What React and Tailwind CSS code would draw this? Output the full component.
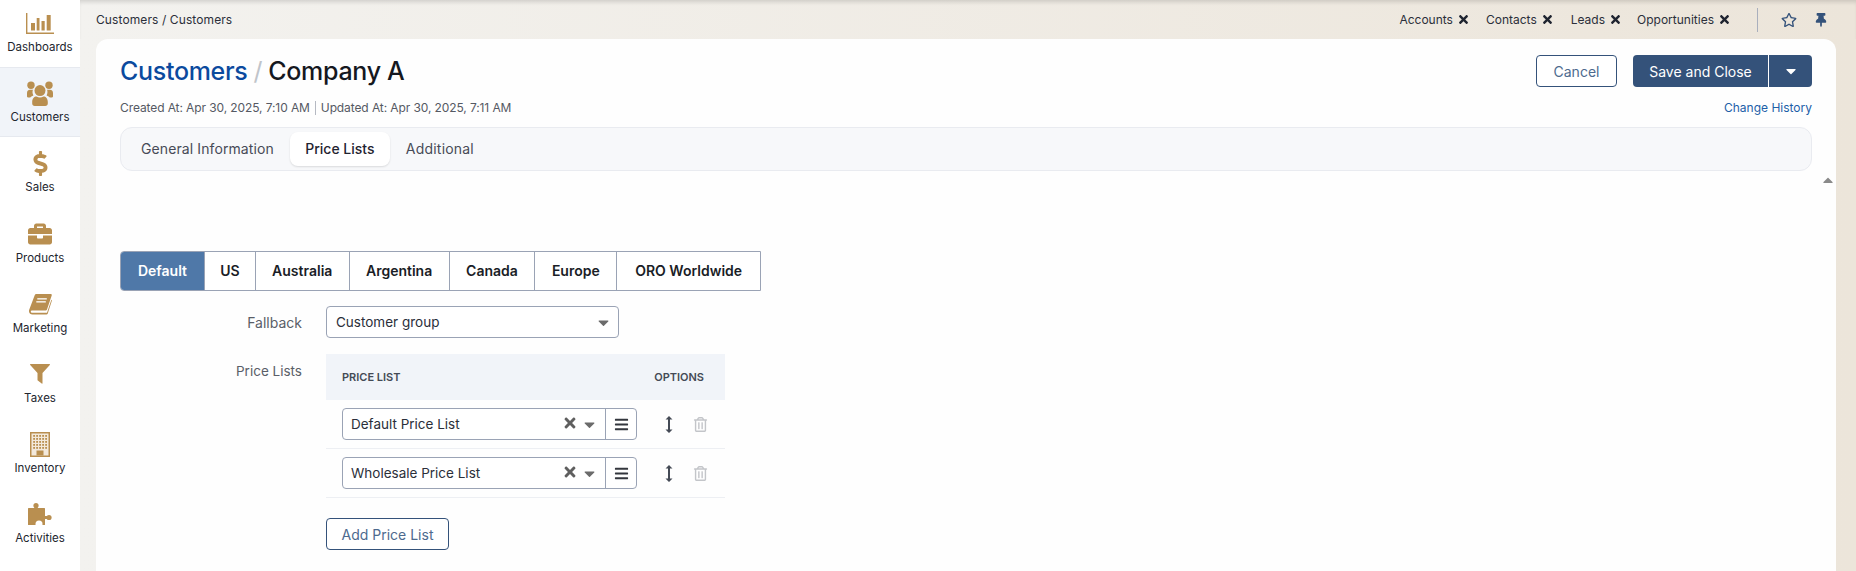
import React from "react";
import { FaDollarSign, FaBriefcase, FaTimes, FaBars, FaRegTrashAlt, FaThumbtack, FaRegStar, FaCaretDown, FaCaretUp } from "react-icons/fa";

const gold = "#b98f50";

const DashIcon = () => (
  <svg width="28" height="21" viewBox="0 0 28 21" fill={gold}>
    <path d="M0 0h1.4v19.6H28V21H0z" />
    <rect x="5" y="10" width="4" height="7.5" />
    <rect x="10.7" y="5" width="2.8" height="12.5" />
    <rect x="15.5" y="8" width="3.2" height="9.5" />
    <rect x="20.7" y="2" width="4" height="15.5" />
  </svg>
);

const UsersIcon = () => (
  <svg width="26" height="25" viewBox="0 0 26 25" fill={gold}>
    <circle cx="4" cy="4.2" r="3.7" />
    <circle cx="22" cy="4.2" r="3.7" />
    <path d="M0 12c0-2 1.5-3.2 3-3.2h3c-.6 1-.8 3.6.4 5.6-1.6.6-2.6 1.2-3.2 2H1c-.7 0-1-.5-1-1.2zM26 12c0-2-1.5-3.2-3-3.2h-3c.6 1 .8 3.6-.4 5.6 1.6.6 2.6 1.2 3.2 2h2.200c.7 0 1-.5 1-1.200z" />
    <circle cx="13" cy="9.600" r="5.500" />
    <path d="M5.200 21c0-3.500 2-5.500 4.300-5.500 2 1.200 5 1.200 7 0 2.300 0 4.300 2 4.300 5.500v1.500c0 1.500-1 2.500-2.500 2.500H7.700c-1.500 0-2.500-1-2.500-2.500z" />
  </svg>
);

const BookIcon = () => (
  <svg width="23" height="21" viewBox="0 0 23 21" fill={gold}>
    <path d="M7.500 0H21.500c1 0 1.500.6 1.200 1.500L18 15.500c-.3.8-.8 1.100-1.600 1.100H3.500c-1.400 0-1.800.6-1.600 1.300.2.600.8.9 1.600.9h14.500l4.400-13 .6.500-4.300 13.400c-.2.500-.7.8-1.300.8H3.500C1.500 20.500.2 19.300 0 17.500c-.1-.6 0-1.200.2-1.800L5.700 1.300C6 .5 6.700 0 7.500 0z" />
    <rect x="8.300" y="4.200" width="9.500" height="1.300" fill="#fff" />
    <rect x="7.300" y="7.200" width="9.500" height="1.300" fill="#fff" />
  </svg>
);

const FilterIcon = () => (
  <svg width="20" height="20" viewBox="0 0 20 20" fill={gold}>
    <path d="M0 .5C0 .2.200 0 .5 0h19c.3 0 .5.200.5.500 0 .2-.1.300-.2.400L12.500 9v10.500l-.5.300-4.500-3.600V9L.2.900C.1.800 0 .7 0 .5z" />
  </svg>
);

const BuildingIcon = () => (
  <svg width="20" height="25" viewBox="0 0 20 25">
    <rect x="0" y="0" width="20" height="25" fill={gold} />
    <rect x="1.500" y="1.500" width="17" height="22" fill="#f3e9db" />
    {[3, 6, 9, 12, 15].map((y) =>
      [3.200, 6.200, 9.200, 12.200, 15.200].map((x) => <rect key={x + "-" + y} x={x} y={y} width="1.800" height="1.800" fill={gold} />)
    )}
    <rect x="6.500" y="18.500" width="7" height="5" fill={gold} />
  </svg>
);

const PuzzleIcon = () => (
  <svg width="24" height="22" viewBox="0 0 24 22" fill={gold}>
    <rect x="0" y="5" width="17" height="17" rx="0.500" />
    <circle cx="8" cy="2.600" r="2.600" />
    <rect x="6.500" y="3" width="3" height="3" />
    <circle cx="21" cy="14.500" r="2.600" />
    <rect x="16" y="13" width="4" height="3" />
    <circle cx="11" cy="21" r="3.500" fill="#fff" />
    <rect x="8.700" y="20" width="4.600" height="2" fill="#fff" />
  </svg>
);

const SortIcon = () => (
  <svg width="8" height="17" viewBox="0 0 8 17" fill="#444a55">
    <path d="M4 0L7.500 3.500H5V13.500H7.500L4 17 .5 13.500H3V3.500H.5z" />
  </svg>
);

const navItems = [
  { label: "Dashboards", icon: <DashIcon />, h: "h-[67px]", pt: "pt-[10px]" },
  { label: "Customers", icon: <UsersIcon />, h: "h-[70px]", pt: "pt-[12px]", active: true },
  { label: "Sales", icon: <FaDollarSign size={25} color={gold} />, h: "h-[70px]", pt: "pt-[13px]" },
  { label: "Products", icon: <FaBriefcase size={24} color={gold} />, h: "h-[70px]", pt: "pt-[14px]" },
  { label: "Marketing", icon: <BookIcon />, h: "h-[70px]", pt: "pt-[14px]" },
  { label: "Taxes", icon: <FilterIcon />, h: "h-[70px]", pt: "pt-[14px]" },
  { label: "Inventory", icon: <BuildingIcon />, h: "h-[70px]", pt: "pt-[14px]" },
  { label: "Activities", icon: <PuzzleIcon />, h: "h-[70px]", pt: "pt-[14px]" },
];

function NavItem({ item }) {
  return (
    <div className={`${item.h} ${item.pt} flex flex-col items-center ${item.active ? "bg-[#f1f4f9] border-y border-[#e6e9ef]" : ""}`}>
      <div className="h-[26px] flex items-center justify-center">{item.icon}</div>
      <div className="mt-[3px] text-[11.5px] leading-[16px] text-[#22252e]">{item.label}</div>
    </div>
  );
}

function Fav({ label, className = "" }) {
  return (
    <div className={`flex items-center gap-[4px] text-[12px] text-[#2b2f3a] ${className}`}>
      <span>{label}</span>
      <FaTimes size={13} color="#1f2430" />
    </div>
  );
}

const scopes = [
  { label: "Default", w: "w-[83px]", active: true },
  { label: "US", w: "w-[51px]" },
  { label: "Australia", w: "w-[94px]" },
  { label: "Argentina", w: "w-[100px]" },
  { label: "Canada", w: "w-[86px]" },
  { label: "Europe", w: "w-[82px]" },
  { label: "ORO Worldwide", w: "w-[144px]" },
];

function Row({ label }) {
  return (
    <div className="h-[49px] border-b border-[#edeff3] flex items-center pl-[16px]">
      <div className="w-[295px] h-[32px] border border-[#9aa3b5] rounded-[4px] flex items-center bg-white">
        <span className="flex-1 pl-[8px] text-[13.5px] text-[#2b2f3a]">{label}</span>
        <FaTimes size={16} color="#5f5f5f" className="mb-[2px]" />
        <FaCaretDown size={17} color="#6b6b6b" className="ml-[3px] mr-[7px]" />
        <div className="w-[31px] h-full border-l border-[#9aa3b5] flex items-center justify-center">
          <FaBars size={15} color="#33363d" />
        </div>
      </div>
      <div className="ml-[28px]"><SortIcon /></div>
      <FaRegTrashAlt size={15} color="#c3c5c9" className="ml-[20px]" />
    </div>
  );
}

export default function App() {
  return (
    <div className="flex h-[571px] w-[1856px] overflow-hidden bg-white font-['Inter',sans-serif] text-[#2b2f3a]">
      <aside className="w-[80px] shrink-0 bg-white">
        {navItems.map((it) => (
          <NavItem key={it.label} item={it} />
        ))}
      </aside>
      <main className="flex-1 min-w-0 flex flex-col bg-gradient-to-r from-[#f3f2ef] to-[#ece5da]">
        <header className="h-[39px] shrink-0 flex items-center pl-[16px] pr-[28px] shadow-[inset_0_4px_4px_-2px_rgba(0,0,0,0.14)]">
          <div className="text-[12px] tracking-[0.1px] text-[#2b2f3a]">Customers / Customers</div>
          <div className="ml-auto flex items-center">
            <Fav label="Accounts" />
            <Fav label="Contacts" className="ml-[16px]" />
            <Fav label="Leads" className="ml-[17px]" />
            <Fav label="Opportunities" className="ml-[15px]" />
            <div className="w-px h-[24px] bg-[#a9afbd] ml-[26px]" />
            <FaRegStar size={16} color="#34527a" className="ml-[23px]" />
            <FaThumbtack size={14} color="#34527a" className="ml-[17px]" />
          </div>
        </header>
        <section className="relative flex-1 mr-[20px] ml-[16px] rounded-t-[12px] bg-[#fefefe] px-[24px] pt-[16px]">
          <div className="flex items-start justify-between h-[32px]">
            <h1 className="text-[25px] leading-[32px] font-medium whitespace-nowrap tracking-[-0.3px]">
              <span className="text-[#0b4a9e]">Customers</span>
              <span className="text-[#c0c4ca] mx-[6px] font-normal">/</span>
              <span className="text-[#15181f]">Company A</span>
            </h1>
            <div className="flex">
              <button className="w-[81px] h-[32px] rounded-[4px] border border-[#34527a] text-[14px] text-[#4d6a8e] bg-white">Cancel</button>
              <div className="ml-[16px] h-[32px] flex rounded-[4px] bg-[#34527a] text-white">
                <div className="w-[136px] flex items-center justify-center text-[14px] border-r border-white">Save and Close</div>
                <div className="w-[43px] flex items-center justify-center"><FaCaretDown size={16} color="#fff" /></div>
              </div>
            </div>
          </div>
          <div className="mt-[12px] h-[18px] flex items-center justify-between text-[12px]">
            <div className="flex items-center text-[#555963] tracking-[-0.1px]">
              <span>Created At: Apr 30, 2025, 7:10 AM</span>
              <span className="w-px h-[14px] bg-[#b5b9c2] mx-[5px]" />
              <span>Updated At: Apr 30, 2025, 7:11 AM</span>
            </div>
            <a className="text-[#1d5fa8]">Change History</a>
          </div>
          <div className="mt-[10px] h-[44px] rounded-[12px] border border-[#e9ebf0] bg-[#f7f8fa] flex items-center pl-[4px] text-[14px]">
            <div className="px-[16px] pb-[2px] text-[#474b57] tracking-[0.1px]">General Information</div>
            <div className="w-[100px] h-[34px] pb-[2px] flex items-center justify-center rounded-[8px] bg-white font-medium text-[#1f2330] shadow-[0_1px_2px_rgba(0,0,0,0.12)]">Price Lists</div>
            <div className="px-[16px] pb-[2px] text-[#474b57] tracking-[0.2px]">Additional</div>
          </div>
          <FaCaretUp size={16} color="#8a8a8a" className="absolute right-[0px] top-[133px]" />

          <div className="mt-[80px] flex h-[40px] w-[641px] border border-[#9aa3b5] rounded-l-[4px] text-[14px] font-semibold text-[#1a1d26]">
            {scopes.map((s, i) => (
              <div key={s.label} className={`${s.w} pb-[2px] flex items-center justify-center ${i > 0 ? "border-l border-[#9aa3b5]" : ""} ${s.active ? "bg-[#4f78a8] text-white rounded-l-[3px]" : "bg-white"}`}>
                {s.label}
              </div>
            ))}
          </div>

          <div className="mt-[15px] flex items-center h-[32px]">
            <div className="w-[182px] text-right text-[14px] text-[#5a5e68]">Fallback</div>
            <div className="ml-[24px] w-[293px] h-[32px] border border-[#9aa3b5] rounded-[4px] bg-white flex items-center pl-[9px] pr-[6px] text-[13.5px]">
              <span className="flex-1 text-[#2b2f3a]">Customer group</span>
              <FaCaretDown size={17} color="#6b6b6b" />
            </div>
          </div>

          <div className="mt-[16px] flex items-start">
            <div className="w-[182px] pt-[7px] text-right text-[13.5px] leading-[20px] text-[#5a5e68]">Price Lists</div>
            <div className="ml-[24px] w-[399px]">
              <div className="h-[46px] bg-[#f1f4f9] flex items-center pl-[16px] text-[11px] font-semibold text-[#444a55]">
                <span>PRICE LIST</span>
                <span className="ml-auto mr-[21px]">OPTIONS</span>
              </div>
              <Row label="Default Price List" />
              <Row label="Wholesale Price List" />
              <button className="mt-[20px] w-[123px] h-[32px] rounded-[4px] border border-[#34527a] bg-white text-[14px] text-[#4d6a8e]">Add Price List</button>
            </div>
          </div>
        </section>
      </main>
    </div>
  );
}
